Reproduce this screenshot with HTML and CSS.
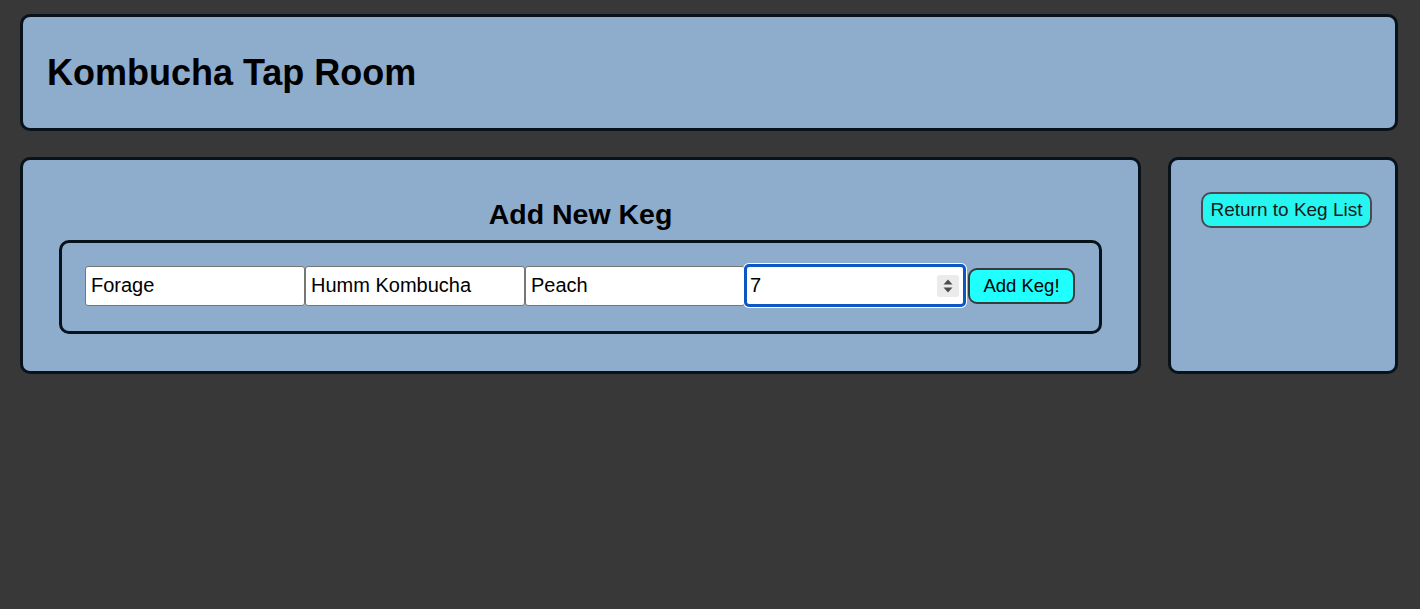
FILE: index.html
```html
<!DOCTYPE html>
<html lang="en">
<head>
<meta charset="utf-8">
<title>Kombucha Tap Room</title>
<link rel="stylesheet" href="styles.css">
</head>
<body>
  <header class="card header">
    <h1 class="title">Kombucha Tap Room</h1>
  </header>
  <main class="layout">
    <section class="card main-card">
      <h2 class="subtitle">Add New Keg</h2>
      <form class="keg-form">
        <input class="field" type="text" value="Forage">
        <input class="field" type="text" value="Humm Kombucha">
        <input class="field" type="text" value="Peach">
        <div class="num-field">
          <input class="num-input" type="text" value="7">
          <span class="spinner">
            <svg width="22" height="22" viewBox="0 0 22 22"><rect width="22" height="22" rx="2" fill="#ebebeb"/><path d="M6.5 9.5 L11 4.5 L15.5 9.5 Z" fill="#4d4d4d"/><path d="M6.5 12.5 L11 17.5 L15.5 12.5 Z" fill="#4d4d4d"/></svg>
          </span>
        </div>
        <button class="btn add-btn" type="button">Add Keg!</button>
      </form>
    </section>
    <aside class="card side-card">
      <button class="btn return-btn" type="button">Return to Keg List</button>
    </aside>
  </main>
</body>
</html>
```

FILE: styles.css
```css
* { box-sizing: border-box; }

html, body {
  margin: 0;
  background: #383838;
}

body {
  padding: 14px 22px 0 20px;
  font-family: "Liberation Sans", Arial, Helvetica, sans-serif;
  color: #000;
  min-height: 609px;
}

.card {
  background: #8eaccc;
  border: 3px solid #08121a;
  border-radius: 10px;
}

.header {
  height: 117px;
  display: flex;
  align-items: center;
  padding: 0 24px;
}

.title {
  margin: 0;
  font-size: 36px;
  font-weight: bold;
  line-height: 40px;
}

.layout {
  margin-top: 26px;
  display: grid;
  grid-template-columns: 1fr 230px;
  gap: 27px;
}

.main-card {
  height: 217px;
  padding: 38px 36px 0 36px;
}

.subtitle {
  margin: 0 0 10px;
  text-align: center;
  font-size: 28.5px;
  font-weight: bold;
  line-height: 32px;
}

.keg-form {
  border: 3px solid #08121a;
  border-radius: 10px;
  padding: 21px 23px 24px;
  display: flex;
  align-items: center;
  height: 94px;
}

.field {
  width: 220px;
  height: 40px;
  border: 1px solid #767676;
  border-radius: 3px;
  background: #fff;
  font-family: "Liberation Sans", Arial, sans-serif;
  font-size: 20px;
  padding: 0 5px;
  color: #000;
  margin: 0;
}

.num-field {
  width: 222px;
  height: 43px;
  margin: 0 -1px;
  border: 3px solid #0d56c6;
  border-radius: 5px;
  box-shadow: 0 0 0 1px #fff;
  background: #fff;
  display: flex;
  align-items: center;
  padding: 0 4px 0 3px;
}

.num-input {
  flex: 1;
  min-width: 0;
  border: 0;
  outline: none;
  font-family: "Liberation Sans", Arial, sans-serif;
  font-size: 20px;
  padding: 0;
  margin: 0;
  background: transparent;
}

.spinner {
  display: flex;
  width: 22px;
  height: 22px;
}

.btn {
  font-family: "Liberation Sans", Arial, sans-serif;
  height: 36px;
  padding: 0;
  cursor: pointer;
  text-align: center;
}

.add-btn {
  width: 107px;
  margin-left: 3px;
  background: #1ffffd;
  border: 2px solid #3a3a3a;
  border-radius: 9px;
  font-size: 18.5px;
  color: #000;
}

.side-card {
  padding: 32px 20px 0 30px;
  display: flex;
  align-items: flex-start;
}

.return-btn {
  width: 171px;
  background: #27f5f0;
  border: 2px solid #4a4a55;
  border-radius: 10px;
  font-size: 19px;
  color: #1a1a1a;
}
```
